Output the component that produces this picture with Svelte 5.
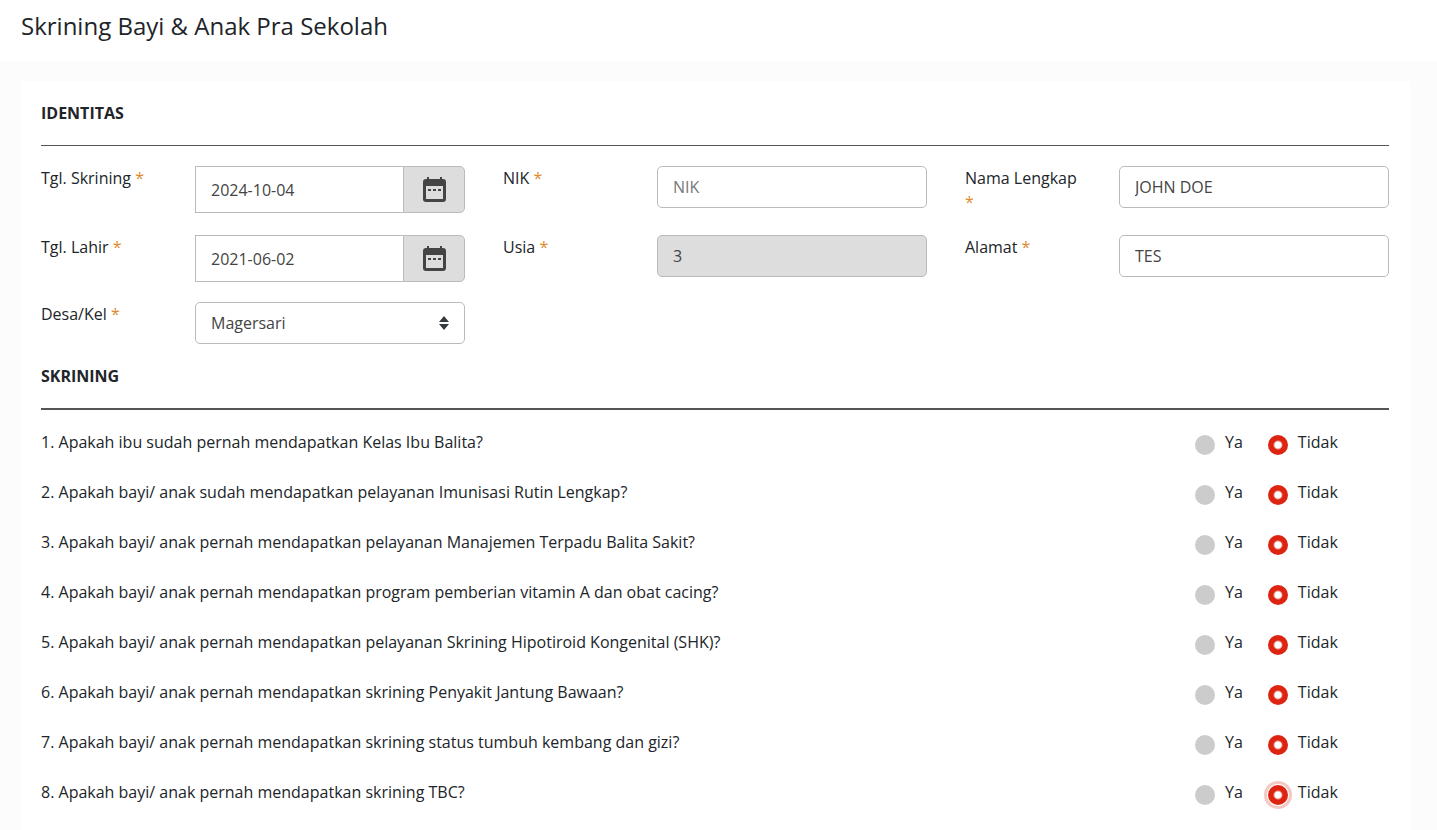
<script lang="ts">
  let tglSkrining: string = '2024-10-04';
  let tglLahir: string = '2021-06-02';
  let nik: string = '';
  let usia: string = '3';
  let nama: string = 'JOHN DOE';
  let alamat: string = 'TES';
  let desa: string = 'Magersari';

  let questions = [
    { text: 'Apakah ibu sudah pernah mendapatkan Kelas Ibu Balita?', answer: 'tidak' },
    { text: 'Apakah bayi/ anak sudah mendapatkan pelayanan Imunisasi Rutin Lengkap?', answer: 'tidak' },
    { text: 'Apakah bayi/ anak pernah mendapatkan pelayanan Manajemen Terpadu Balita Sakit?', answer: 'tidak' },
    { text: 'Apakah bayi/ anak pernah mendapatkan program pemberian vitamin A dan obat cacing?', answer: 'tidak' },
    { text: 'Apakah bayi/ anak pernah mendapatkan pelayanan Skrining Hipotiroid Kongenital (SHK)?', answer: 'tidak' },
    { text: 'Apakah bayi/ anak pernah mendapatkan skrining Penyakit Jantung Bawaan?', answer: 'tidak' },
    { text: 'Apakah bayi/ anak pernah mendapatkan skrining status tumbuh kembang dan gizi?', answer: 'tidak' },
    { text: 'Apakah bayi/ anak pernah mendapatkan skrining TBC?', answer: 'tidak' }
  ];

  const options = [
    { value: 'ya', label: 'Ya' },
    { value: 'tidak', label: 'Tidak' }
  ];

  // last touched radio keeps the focus ring
  let focused: string = 'q8-tidak';
</script>

{#snippet calendar()}
  <svg width="23" height="25" viewBox="0 0 23 25" aria-hidden="true">
    <path
      fill="#444"
      fill-rule="evenodd"
      d="M4 0h2v2h11V0h2v2h1a3 3 0 0 1 3 3v17a3 3 0 0 1-3 3H3a3 3 0 0 1-3-3V5a3 3 0 0 1 3-3h1zM3 9v13h17V9z"
    />
    <path fill="#444" d="M5 12h3v2H5zM10 12h3v2h-3zM15 12h3v2h-3z" />
  </svg>
{/snippet}

<div class="page">
  <header>
    <h1>Skrining Bayi &amp; Anak Pra Sekolah</h1>
  </header>

  <form class="card" on:submit|preventDefault>
    <h2>IDENTITAS</h2>
    <hr />

    <div class="fields">
      <div class="field">
        <label for="tgl-skrining">Tgl. Skrining <span>*</span></label>
        <div class="input-group">
          <input type="text" id="tgl-skrining" bind:value={tglSkrining} />
          <button type="button" aria-label="Pilih tanggal skrining">{@render calendar()}</button>
        </div>
      </div>
      <div class="field">
        <label for="nik">NIK <span>*</span></label>
        <input type="text" id="nik" placeholder="NIK" bind:value={nik} />
      </div>
      <div class="field">
        <label for="nama">Nama Lengkap <span>*</span></label>
        <input type="text" id="nama" bind:value={nama} />
      </div>

      <div class="field">
        <label for="tgl-lahir">Tgl. Lahir <span>*</span></label>
        <div class="input-group">
          <input type="text" id="tgl-lahir" bind:value={tglLahir} />
          <button type="button" aria-label="Pilih tanggal lahir">{@render calendar()}</button>
        </div>
      </div>
      <div class="field">
        <label for="usia">Usia <span>*</span></label>
        <input type="text" id="usia" bind:value={usia} readonly />
      </div>
      <div class="field">
        <label for="alamat">Alamat <span>*</span></label>
        <input type="text" id="alamat" bind:value={alamat} />
      </div>

      <div class="field">
        <label for="desa">Desa/Kel <span>*</span></label>
        <div class="select">
          <select id="desa" bind:value={desa}>
            <option>Magersari</option>
          </select>
          <svg width="10" height="14" viewBox="0 0 10 14" aria-hidden="true">
            <path fill="#343a40" d="M5 0l5 6H0zM0 8h10l-5 6z" />
          </svg>
        </div>
      </div>
    </div>

    <h2>SKRINING</h2>
    <hr class="thick" />

    <div class="questions">
      {#each questions as q, i}
        <div class="question" role="radiogroup" aria-labelledby="q{i + 1}">
          <p id="q{i + 1}">{i + 1}. {q.text}</p>
          <div class="options">
            {#each options as o}
              <label>
                <input
                  type="radio"
                  name="q{i + 1}"
                  value={o.value}
                  class:focused={focused === `q${i + 1}-${o.value}`}
                  bind:group={q.answer}
                  on:focus={() => (focused = `q${i + 1}-${o.value}`)}
                />
                {o.label}
              </label>
            {/each}
          </div>
        </div>
      {/each}
    </div>
  </form>
</div>

<style>
  :global(body) {
    margin: 0;
    background: #fcfcfc;
  }

  .page {
    display: flex;
    flex-direction: column;
    min-height: 100vh;
    color: #212529;
    font-family: "Open Sans", sans-serif;
    font-size: 16px;
    line-height: 24px;
  }

  header {
    padding: 10px 21px 19px;
    background: #fff;
  }

  h1 {
    margin: 0;
    font-size: 24px;
    font-weight: 400;
    line-height: 32px;
  }

  .card {
    flex: 1;
    margin: 20px 27px 0 21px;
    padding: 20px 21px 0 20px;
    background: #fff;
  }

  h2 {
    margin: 0;
    font-size: 16px;
    font-weight: 700;
  }

  hr {
    margin: 20px 0;
    border: 0;
    border-top: 1px solid #555;
  }

  hr.thick {
    border-top-width: 2px;
  }

  .fields {
    display: grid;
    grid-template-columns: repeat(3, 1fr);
    gap: 20px 38px;
    margin-bottom: 20px;
  }

  .field {
    display: grid;
    grid-template-columns: 116px 1fr;
    column-gap: 38px;
    align-items: start;
  }

  .field label {
    padding-bottom: 1px;
  }

  .field span {
    color: #e08a2c;
  }

  .field input,
  select {
    box-sizing: border-box;
    width: 100%;
    min-width: 0;
    height: 42px;
    margin: 0;
    padding: 0 15px;
    border: 1px solid #bbb;
    border-radius: 5px;
    background: #fff;
    color: #444;
    font: inherit;
    outline: none;
  }

  .field input::placeholder {
    color: #777;
    opacity: 1;
  }

  .field input[readonly] {
    background: #ddd;
  }

  .input-group {
    display: flex;
  }

  .input-group input {
    flex: 1;
    height: 47px;
    border-right: 0;
    border-radius: 0;
  }

  .input-group button {
    display: flex;
    flex: 0 0 62px;
    align-items: center;
    justify-content: center;
    padding: 0;
    border: 1px solid #bbb;
    border-radius: 0 5px 5px 0;
    background: #ddd;
    cursor: pointer;
  }

  .select {
    display: grid;
    align-items: center;
  }

  .select select,
  .select svg {
    grid-area: 1 / 1;
  }

  .select select {
    appearance: none;
  }

  .select svg {
    justify-self: end;
    margin-right: 16px;
    pointer-events: none;
  }

  .questions {
    display: grid;
    row-gap: 26px;
  }

  .question {
    display: grid;
    grid-template-columns: 1fr 194px;
  }

  .question p {
    margin: 0;
  }

  .options {
    display: flex;
    gap: 25px;
  }

  .options label {
    display: flex;
    gap: 10px;
    height: 24px;
  }

  input[type="radio"] {
    appearance: none;
    flex: none;
    width: 20px;
    height: 20px;
    margin: 5px 0 0;
    border-radius: 50%;
    background: #ccc;
    outline: none;
  }

  input[type="radio"]:checked {
    background: radial-gradient(circle, #fff 3px, #dc2410 5px);
  }

  input[type="radio"].focused {
    box-shadow: 0 0 0 1px #fff, 0 0 0 4px #f6c8c3;
  }
</style>
